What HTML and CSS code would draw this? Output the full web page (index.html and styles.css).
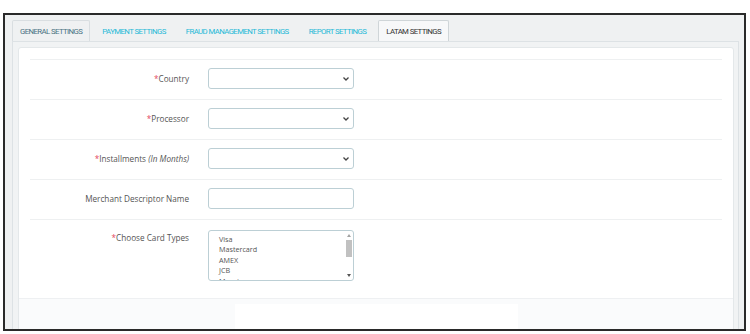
FILE: index.html
```html
<!DOCTYPE html>
<html lang="en">
<head>
    <meta charset="UTF-8">
    <meta name="viewport" content="width=device-width, initial-scale=1.0">
    <title>LATAM Settings</title>
    <link rel="stylesheet" href="styles.css">
</head>
<body>
    <div class="frame">
        <ul class="tabs">
            <li class="tab tab-general">GENERAL SETTINGS</li>
            <li class="tab">PAYMENT SETTINGS</li>
            <li class="tab">FRAUD MANAGEMENT SETTINGS</li>
            <li class="tab">REPORT SETTINGS</li>
            <li class="tab active">LATAM SETTINGS</li>
        </ul>

        <div class="tab-content">
            <div class="panel">
                <div class="form-row">
                    <label class="form-label"><span class="req">*</span>Country</label>
                    <div class="form-field"><select class="select"></select></div>
                </div>
                <div class="form-row">
                    <label class="form-label"><span class="req">*</span>Processor</label>
                    <div class="form-field"><select class="select"></select></div>
                </div>
                <div class="form-row">
                    <label class="form-label"><span class="req">*</span>Installments <em>(In Months)</em></label>
                    <div class="form-field"><select class="select"></select></div>
                </div>
                <div class="form-row">
                    <label class="form-label">Merchant Descriptor Name</label>
                    <div class="form-field"><input type="text" class="input"></div>
                </div>
                <div class="form-row form-row-last">
                    <label class="form-label label-top"><span class="req">*</span>Choose Card Types</label>
                    <div class="form-field">
                        <div class="listbox">
                            <ul class="options">
                                <li>Visa</li>
                                <li>Mastercard</li>
                                <li>AMEX</li>
                                <li>JCB</li>
                                <li>Maestro</li>
                            </ul>
                            <div class="scrollbar">
                                <span class="arrow-up"></span>
                                <span class="thumb"></span>
                                <span class="arrow-down"></span>
                            </div>
                        </div>
                    </div>
                </div>

                <div class="panel-footer">
                    <div class="footer-box"></div>
                </div>
            </div>
        </div>
    </div>
</body>
</html>
```

FILE: styles.css
```css
* {
    margin: 0;
    padding: 0;
    box-sizing: border-box;
}

body {
    background: #fff;
    font-family: 'Open Sans', 'Noto Sans', sans-serif;
    color: #555;
    overflow: hidden;
}

.frame {
    margin: 13px 0 0 3px;
    width: 743px;
    height: 318px;
    border: 2px solid #2a2a2a;
    background: #eff1f2;
    padding: 5px 0 0 7px;
    overflow: hidden;
}

/* tabs */
.tabs {
    display: flex;
    gap: 4px;
    list-style: none;
    height: 21px;
}

.tab {
    padding: 0 7px;
    height: 21px;
    line-height: 21px;
    font-family: 'Roboto', sans-serif;
    font-size: 7.8px;
    letter-spacing: -0.6px;
    color: #25b9d7;
    border: 1px solid transparent;
    border-bottom: none;
    border-radius: 2px 2px 0 0;
}

.tab-general {
    color: #4a7283;
    border-color: #d9dee1;
    background: #eff1f2;
}

.tab.active {
    color: #333;
    border-color: #cfd5d8;
    background: #f7f8f9;
}

.tab-content {
    width: 727px;
    height: 300px;
    border: 1px solid #dde2e5;
    background: #f1f3f4;
    padding: 5px 4px 0 5px;
}

.panel {
    background: #fff;
    border: 1px solid #e4e8ea;
    border-radius: 3px;
    height: 100%;
    padding-top: 11px;
}

/* form rows */
.form-row {
    display: flex;
    align-items: flex-start;
    gap: 19px;
    margin: 0 11px;
    height: 40px;
    border-top: 1px solid #eef0f1;
    padding-top: 8px;
}

.form-row-last {
    height: 79px;
    padding-top: 10px;
}

.form-label {
    width: 159px;
    text-align: right;
    font-size: 8.2px;
    line-height: 21px;
    color: #555;
}

.label-top {
    line-height: 12px;
    padding-top: 2px;
}

.req {
    color: #e3495f;
}

.form-label em {
    font-style: italic;
}

.select,
.input {
    display: block;
    width: 146px;
    height: 21px;
    border: 1px solid #bccfd5;
    border-radius: 3px;
    background-color: #fff;
    font-family: inherit;
    font-size: 9px;
    outline: none;
}

.select {
    appearance: none;
    -webkit-appearance: none;
    background-image: url("data:image/svg+xml,%3Csvg xmlns='http://www.w3.org/2000/svg' width='8' height='6' viewBox='0 0 8 6'%3E%3Cpath d='M1.5 1.5l2.5 2.5 2.5-2.5' fill='none' stroke='%23444' stroke-width='1.3'/%3E%3C/svg%3E");
    background-repeat: no-repeat;
    background-position: right 3px center;
}

/* multi select */
.listbox {
    display: flex;
    width: 146px;
    height: 51px;
    border: 1px solid #bccfd5;
    border-radius: 3px;
    overflow: hidden;
    background: #fff;
}

.options {
    flex: 1;
    list-style: none;
    padding: 3px 0 0 10px;
    font-size: 7.2px;
    line-height: 10.4px;
    color: #555;
}

.scrollbar {
    width: 9px;
    display: flex;
    flex-direction: column;
    align-items: center;
    padding: 3px 0;
    gap: 3px;
}

.arrow-up,
.arrow-down {
    width: 0;
    height: 0;
    border-left: 2.5px solid transparent;
    border-right: 2.5px solid transparent;
}

.arrow-up {
    border-bottom: 3px solid #a3a3a3;
}

.arrow-down {
    border-top: 3px solid #555;
    margin-top: auto;
}

.thumb {
    width: 6px;
    height: 17px;
    background: #c1c1c1;
}

/* footer */
.panel-footer {
    height: 40px;
    border-top: 1px solid #eef0f2;
    background: #fafbfc;
    padding: 5px 0 0 216px;
}

.footer-box {
    width: 283px;
    height: 40px;
    background: #fff;
}
```
